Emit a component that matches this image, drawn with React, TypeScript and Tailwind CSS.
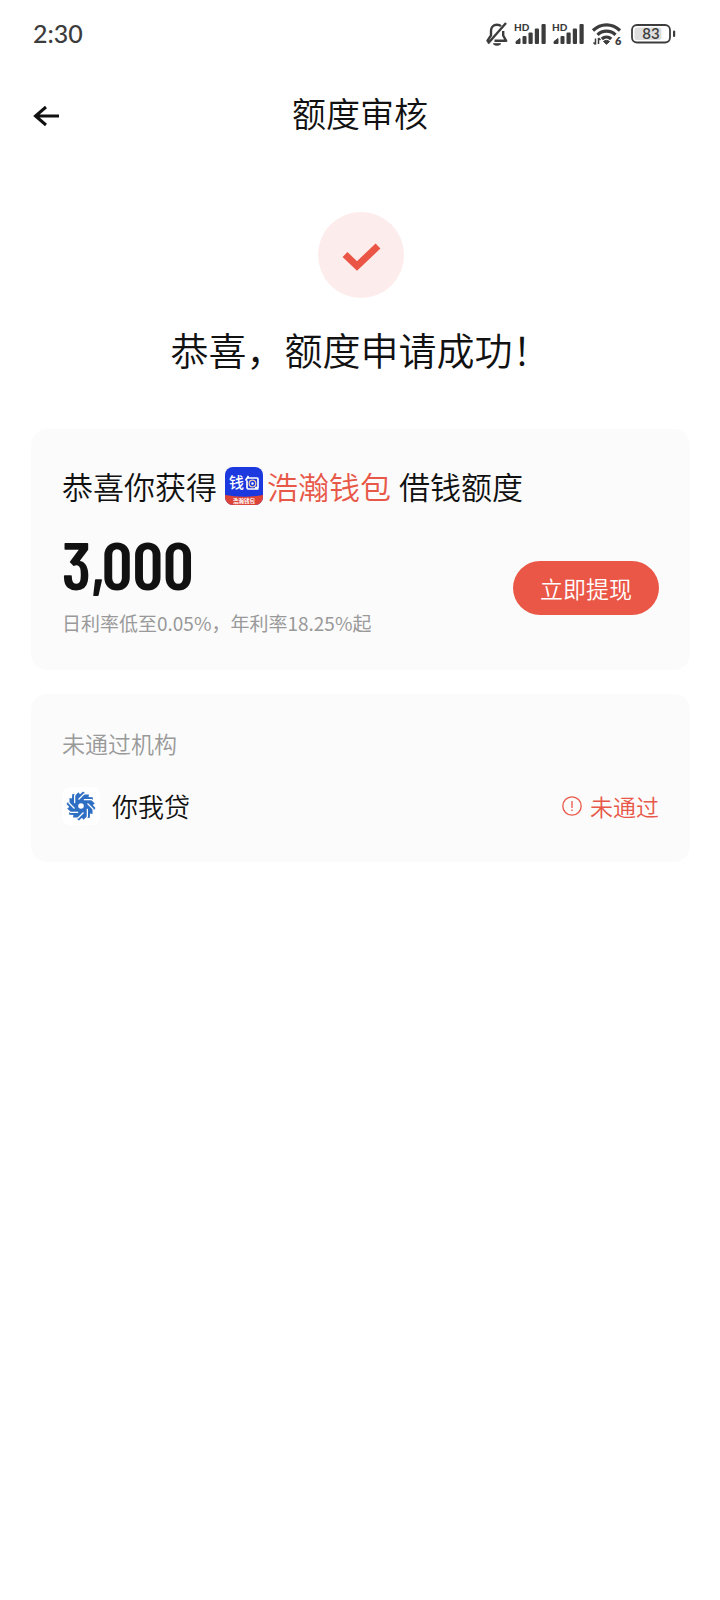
import type { ReactNode } from "react";

const BellOff = () => (
  <svg viewBox="0 0 24 26" className="h-[26px] w-6" fill="none" stroke="#3c3c3c" strokeWidth="2.400" strokeLinejoin="round">
    <path d="M16 5.200C15 4.200 13.500 3.800 12 3.800c-3.800 0-6 2.700-6 6.200v4.300L2.500 19.700l2 .3" />
    <path d="M18.200 10v4.500l3 5.300H9.500" />
    <path d="M21 2 3 22.500" />
    <path d="M8.500 22.800c2 1.600 5 1.600 7 0z" fill="#3c3c3c" strokeWidth="1.200" />
  </svg>
);

const Signal = () => (
  <div className="relative">
    <span className="absolute top-0 left-0 font-['Lato',sans-serif] text-[10px] leading-[10px] font-black">HD</span>
    <svg viewBox="0 0 33 24" className="h-6 w-[33px]" fill="#3c3c3c">
      <path d="M2 21.500v-2l4-3v5z" stroke="#3c3c3c" />
      <rect x="8.500" y="14" width="4" height="8" rx="1" />
      <rect x="14.500" y="10.500" width="4.200" height="11.500" rx="1" />
      <rect x="20.800" y="6.500" width="4.200" height="15.500" rx="1" />
      <rect x="27.500" y="2" width="4.200" height="20" rx="1" />
    </svg>
  </div>
);

const Wifi = () => (
  <svg viewBox="0 0 32 26" className="h-[26px] w-8" fill="none" stroke="#3c3c3c" strokeWidth="3.200">
    <path d="M2 9.500c7.800-7.500 19.200-7.500 27 0" />
    <path d="M6.500 13.800c5-5 13-5 18 0" />
    <path d="M10.800 18c2.700-2.600 6.700-2.600 9.400 0" />
    <path d="m12.500 20.500c1.900-1.500 4.100-1.500 6 0l-3 2.800z" fill="#3c3c3c" stroke="#3c3c3c" strokeWidth="1" />
    <path d="M4.500 17.500v6M2.500 21.500l2 2M7.500 23v-6M7.500 17l2 2" strokeWidth="1.500" />
    <text x="24" y="24" fontSize="11" fontWeight="800" fill="#3c3c3c" stroke="none" className="font-['Lato',sans-serif]">
      6
    </text>
  </svg>
);

const Battery = ({ level }: { level: number }) => (
  <svg viewBox="0 0 45 20" className="h-5 w-[45px]">
    <rect x="1" y="1" width="38" height="17.500" rx="5" fill="#fff" stroke="#3c3c3c" strokeWidth="1.800" />
    <rect x="3.500" y="3.500" width="27" height="12.500" rx="2.500" fill="#dedede" />
    <rect x="42" y="6.500" width="2.200" height="6.500" rx="1" fill="#3c3c3c" />
    <text x="20" y="15" textAnchor="middle" fontSize="15" fontWeight="600" fill="#3c3c3c" className="font-['Lato',sans-serif]">
      {level}
    </text>
  </svg>
);

const StatusBar = () => (
  <div className="flex h-[68px] items-center justify-between pr-11 pl-[33px] text-[#3c3c3c]">
    <span className="font-['Lato',sans-serif] text-[25px] font-medium">2:30</span>
    <div className="flex items-center">
      <BellOff />
      <div className="flex items-center gap-[5px] pr-[6px] pl-[5px]">
        <Signal />
        <Signal />
      </div>
      <Wifi />
      <div className="pl-2">
        <Battery level={83} />
      </div>
    </div>
  </div>
);

const WalletLogo = () => (
  <span className="flex h-[38px] w-[38px] shrink-0 flex-col overflow-hidden rounded-lg bg-[#1c39e0] text-center text-white">
    <svg viewBox="0 0 38 38" className="h-full w-full">
      <text x="4" y="21" fontSize="15" fontWeight="500" fill="#fff">
        钱
      </text>
      <path
        d="M23.500 9 20.500 13.500M22.500 11h9.500q1 0 1 1v8.500h-3M22 13.500v7q0 1.500 1.500 1.500h10"
        fill="none"
        stroke="#fff"
        strokeWidth="1.700"
      />
      <circle cx="27.500" cy="16.500" r="3.300" fill="#1c39e0" stroke="#e8c9a8" strokeWidth="1.300" />
      <circle cx="27.500" cy="16.500" r="1.200" fill="#fff" />
      <path d="M0 28q19 3.500 38 0v10H0z" fill="#dd4336" />
      <text x="19" y="35.500" textAnchor="middle" fontSize="5.500" fontWeight="700" fill="#fff">
        浩瀚钱包
      </text>
    </svg>
  </span>
);

const blades = [0, 45, 90, 135, 180, 225, 270, 315];

const NiwodaiLogo = () => (
  <span className="flex h-[38px] w-[38px] items-center justify-center rounded-lg bg-white">
    <svg viewBox="-15 -15 30 30" className="h-[30px] w-[30px]">
      <circle r="11" fill="#2e6fc4" />
      {blades.map((angle) => (
        <path key={angle} d="M-5-8 2-14.500 4-13 2.500-11.500H8L7-6z" transform={`rotate(${angle})`} fill="#2e6fc4" />
      ))}
      {blades.map((angle) => (
        <path key={angle} d="M3.500-12.500-2.500-6.500" transform={`rotate(${angle})`} stroke="#fff" strokeWidth="1.300" />
      ))}
      <circle r="2.800" fill="#fff" />
    </svg>
  </span>
);

const Card = ({ children }: { children: ReactNode }) => (
  <section className="rounded-2xl bg-[#fbfbfb] px-[31px]">{children}</section>
);

const App = () => (
  <div className="min-h-screen bg-white font-['Noto_Sans_CJK_SC',sans-serif] font-[350] text-[#111]">
    <StatusBar />

    <header className="grid h-[92px] grid-cols-[60px_1fr_60px] items-center px-[30px]">
      <button type="button" aria-label="返回" className="flex h-10 items-center">
        <svg viewBox="0 0 32 24" className="mt-1 h-6 w-8" fill="none" stroke="#111" strokeWidth="3">
          <path d="M16 3 5.500 12 16 21M6 12h23" />
        </svg>
      </button>
      <h1 className="pb-0.5 text-center text-[34px] leading-10">额度审核</h1>
    </header>

    <main className="pr-[30px] pl-[31px]">
      <div className="flex flex-col items-center pt-[52px] pb-14">
        <div className="flex h-[86px] w-[86px] items-center justify-center rounded-full bg-[#fdecec]">
          <svg viewBox="0 0 40 30" className="mt-1 h-[30px] w-10" fill="none" stroke="#eb5545" strokeWidth="7">
            <path d="m4 12.500 12 11.500L37 4" />
          </svg>
        </div>
        <h2 className="mt-[27px] text-[38px] leading-[48px]">恭喜，额度申请成功！</h2>
      </div>

      <div className="flex flex-col gap-6">
        <Card>
          <div className="flex items-center pt-[38px] text-[31px] leading-[38px]">
            <span>恭喜你获得</span>
            <span className="mr-1 ml-2">
              <WalletLogo />
            </span>
            <span className="text-[#e85848]">浩瀚钱包</span>
            <span className="ml-2">借钱额度</span>
          </div>
          <div className="flex items-end justify-between pt-6 pb-[33px]">
            <div>
              <p className="font-['Barlow_Condensed','Roboto',sans-serif] text-[68px] leading-[68px] font-semibold">3,000</p>
              <p className="mt-3 text-[19px] leading-7 font-normal text-[#999]">日利率低至0.05%，年利率18.25%起</p>
            </div>
            <button type="button" className="mb-[22px] h-[54px] rounded-full bg-[#ea5747] px-[27px] text-[23px] text-white">
              立即提现
            </button>
          </div>
        </Card>

        <Card>
          <h3 className="pt-[33px] text-[23px] leading-8 text-[#999]">未通过机构</h3>
          <div className="flex items-center justify-between pt-7 pb-[37px]">
            <div className="flex items-center gap-3 text-[26px] leading-[38px]">
              <NiwodaiLogo />
              <span>你我贷</span>
            </div>
            <div className="flex items-center gap-2 text-[23px] text-[#e85848]">
              <svg viewBox="0 0 20 20" className="h-5 w-5" fill="none" stroke="#e85848" strokeWidth="1.300">
                <circle cx="10" cy="10" r="9.200" />
                <path d="M10 5v7M10 13.500v1.500" />
              </svg>
              <span>未通过</span>
            </div>
          </div>
        </Card>
      </div>
    </main>
  </div>
);

export default App;
